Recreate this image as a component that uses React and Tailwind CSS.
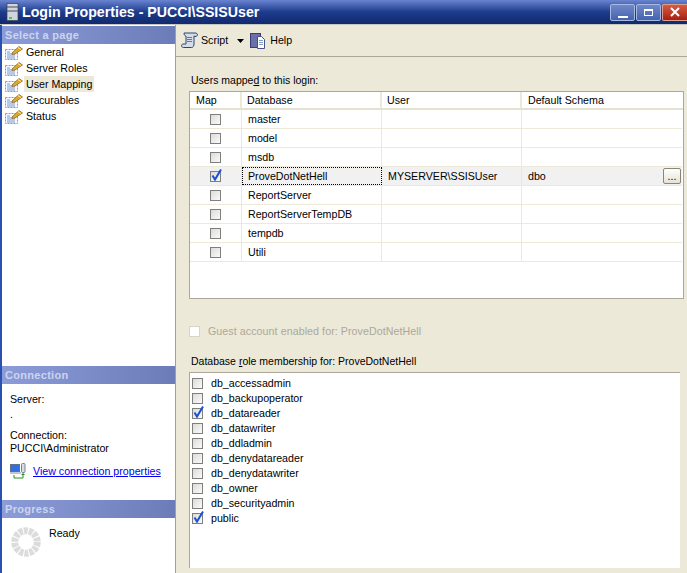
function PageIcon() {
  return (
    <svg width="18" height="15" viewBox="0 0 18 15" className="shrink-0">
      <rect x="0.500" y="4.500" width="12" height="10" fill="#f4f8ff" stroke="#8a9ab8" strokeDasharray="2 1" />
      <path d="M2 7h3M2 9h8M2 11h8M2 13h8" stroke="#7a9ad0" strokeWidth="1" />
      <path d="M7 8L14 1.500l3.500 2.500-7.500 5-3 .5z" fill="#e4a828" stroke="#7a5c18" strokeWidth="0.7" />
      <path d="M13 2.500l3 2" stroke="#ffeea0" strokeWidth="1" />
    </svg>
  );
}

function Check({ checked, className = "" }) {
  return (
    <span className={"relative block w-[11px] h-[11px] shrink-0 border border-[#7f7f7f] bg-gradient-to-br from-[#dcdcd6] to-[#fafafa] " + className}>
      {checked ? (
        <svg width="13" height="14" viewBox="0 0 13 14" className="absolute left-[-1px] top-[-4px]">
          <path d="M2.500 7.500L5 11.500L11 1.500" fill="none" stroke="#1a50d8" strokeWidth="2" />
        </svg>
      ) : null}
    </span>
  );
}

function SectionHead({ children }) {
  return (
    <div className="h-[18px] flex items-center pl-[3px] text-[11px] font-bold text-[#ccd4ee] bg-gradient-to-r from-[#8c9cd8] to-[#6c7cb8] tracking-[0.3px]">
      {children}
    </div>
  );
}

const pages = ["General", "Server Roles", "User Mapping", "Securables", "Status"];
const dbs = ["master", "model", "msdb", "ProveDotNetHell", "ReportServer", "ReportServerTempDB", "tempdb", "Utili"];
const roles = [
  ["db_accessadmin", false],
  ["db_backupoperator", false],
  ["db_datareader", true],
  ["db_datawriter", false],
  ["db_ddladmin", false],
  ["db_denydatareader", false],
  ["db_denydatawriter", false],
  ["db_owner", false],
  ["db_securityadmin", false],
  ["public", true],
];

function Spinner() {
  return (
    <svg width="30" height="30" viewBox="0 0 30 30" className="shrink-0">
      <circle cx="15" cy="15" r="11.250" fill="none" stroke="#dcdcdc" strokeWidth="7" strokeDasharray="4 1.050" />
    </svg>
  );
}

export default function App() {
  return (
    <div
      className="w-[687px] h-[573px] flex flex-col overflow-hidden bg-[#ece9d8] text-[10.67px] leading-[13px] text-black"
      style={{ fontFamily: '"Liberation Sans", Arial, sans-serif' }}
    >
      {/* Title bar */}
      <div className="h-[25px] shrink-0 flex items-center bg-gradient-to-b from-[#6a84d0] via-[#1c3c8c] to-[#12296e] border-b border-[#c8c8c0]">
        <svg width="14" height="18" viewBox="0 0 14 18" className="ml-[6px] shrink-0">
          <rect x="1" y="0.500" width="11" height="17" fill="#d0d4dc" stroke="#3a4250" strokeWidth="0.700" />
          <path d="M1 4h11M1 8h11" stroke="#4a5058" />
          <rect x="3" y="14" width="3" height="2" fill="#40d040" />
        </svg>
        <span className="ml-[2px] text-[14.2px] font-bold text-white">
          {"Login Properties - PUCCI\\SSISUser"}
        </span>
        <div className="ml-auto flex gap-[1px] items-center">
          <div className="w-[25px] h-[17px] rounded-[2px] border border-[#a8b8e0] bg-gradient-to-b from-[#7088c8] to-[#4464b0] flex items-end justify-center pb-[2px]">
            <span className="block w-[10px] h-[2px] bg-white" />
          </div>
          <div className="w-[25px] h-[17px] rounded-[2px] border border-[#a8b8e0] bg-gradient-to-b from-[#7088c8] to-[#4464b0] flex items-center justify-center">
            <span className="block w-[9px] h-[7px] border border-t-2 border-white" />
          </div>
          <div className="w-[25px] h-[17px] rounded-l-[2px] border border-[#d8a090] border-r-0 bg-gradient-to-b from-[#d85a40] to-[#a81c14] flex items-center justify-center">
            <svg width="10" height="10" viewBox="0 0 10 10">
              <path d="M1 1l8 8M9 1l-8 8" stroke="#fff" strokeWidth="2" />
            </svg>
          </div>
        </div>
      </div>

      <div className="flex-1 flex min-h-0">
        {/* Sidebar */}
        <div className="w-[176px] shrink-0 flex flex-col bg-white border-l-2 border-l-[#2a50b0] border-r border-r-[#a0a098] pt-[1px]">
          <SectionHead>Select a page</SectionHead>
          <div className="flex flex-col pl-[3px]">
            {pages.map((p) => (
              <div key={p} className="h-[16px] flex items-center gap-[1px]">
                <PageIcon />
                <span className={"px-[2px] h-[16px] leading-[16px] " + (p === "User Mapping" ? "bg-[#ece9d8]" : "")}>{p}</span>
              </div>
            ))}
          </div>
          <div className="mt-auto">
            <SectionHead>Connection</SectionHead>
            <div className="pl-[8px] pt-[8px] h-[116px]">
              <div className="leading-[15px]">Server:</div>
              <div className="leading-[15px]">.</div>
              <div className="leading-[13px] mt-[7px]">Connection:</div>
              <div className="leading-[13px]">{"PUCCI\\Administrator"}</div>
              <div className="flex items-center gap-[7px] mt-[8px]">
                <svg width="16" height="16" viewBox="0 0 16 16" className="shrink-0">
                  <rect x="0.500" y="1.500" width="9" height="7" fill="#2f6fe0" stroke="#60708a" />
                  <rect x="0" y="9" width="11" height="2" fill="#c0c6d0" />
                  <rect x="11.500" y="0.500" width="3.500" height="9" rx="1" fill="#d8dce4" stroke="#7a8290" />
                  <path d="M4 12v3h9v-4" fill="none" stroke="#2a9020" strokeWidth="1" />
                  <path d="M11 12l2-2 2 2z" fill="#2a9020" />
                </svg>
                <span className="text-[#0000ee] underline">View connection properties</span>
              </div>
            </div>
            <SectionHead>Progress</SectionHead>
            <div className="h-[55px] flex items-start pl-[9px] pt-[9px] gap-[8px]">
              <Spinner />
              <span>Ready</span>
            </div>
          </div>
        </div>

        {/* Main */}
        <div className="flex-1 min-w-0 flex flex-col">
          <div className="h-[32px] shrink-0 flex items-center pl-[5px] border-b border-[#aca899]">
            <svg width="17" height="17" viewBox="0 0 17 17" className="shrink-0">
              <path d="M3 1h11c1.500 0 2.500 .7 2.500 1.700S15.500 4.500 14 4.500L13 4v8c0 2-1 3.500-2.500 3.500H2.500C1 15.500 .5 14.500 .5 13.500S1.500 12 3 12h2V4C4 4 3 3 3 1z" fill="#d4dcea" stroke="#2c4470" />
              <path d="M6 5.500h5M6 7.500h5M6 9.500h5" stroke="#5a78a8" />
            </svg>
            <span className="ml-[3px]">Script</span>
            <svg width="7" height="4" viewBox="0 0 7 4" className="ml-[9px]">
              <path d="M0 0h7L3.500 4z" fill="#000" />
            </svg>
            <svg width="17" height="17" viewBox="0 0 17 17" className="ml-[6px] shrink-0">
              <rect x="0.500" y="1.500" width="10" height="14" fill="#6a70a8" stroke="#3a3e78" />
              <path d="M7.500 4.500h4l3 3v9h-7z" fill="#fff" stroke="#4a5088" />
              <path d="M9 8.500h4M9 10.500h4M9 12.500h4" stroke="#7a9ac8" />
            </svg>
            <span className="ml-[3px]">Help</span>
          </div>

          <div className="flex-1 min-h-0 flex flex-col pl-[13px] pr-[3px]">
            <div className="mt-[17px] h-[13px] shrink-0 ml-[2px] text-[10.5px]">
              Users mappe<span className="underline">d</span> to this login:
            </div>
            <div className="mt-[4px] h-[208px] shrink-0 bg-white border border-[#aca899] overflow-hidden">
              <div className="h-[18px] flex border-b-2 border-b-[#e4e1d0]">
                <div className="w-[52px] pl-[6px] border-r-2 border-r-[#ece9d8] leading-[16px]">Map</div>
                <div className="w-[140px] pl-[5px] border-r-2 border-r-[#ece9d8] leading-[16px]">Database</div>
                <div className="w-[140px] pl-[5px] border-r-2 border-r-[#ece9d8] leading-[16px]">User</div>
                <div className="flex-1 pl-[6px] leading-[16px]">Default Schema</div>
              </div>
              {dbs.map((d) => {
                const active = d === "ProveDotNetHell";
                return (
                  <div key={d} className={"h-[19px] flex mr-[1px] border-b border-b-[#ece9d8] " + (active ? "bg-[#f1f1f1]" : "")}>
                    <div className="w-[52px] flex items-center justify-center border-r border-r-[#ece9d8]">
                      <Check checked={active} className="mr-[1px]" />
                    </div>
                    <div className={"w-[140px] pl-[6px] leading-[18px] " + (active ? "outline-1 outline-dotted outline-black -outline-offset-1" : "border-r border-r-[#ece9d8]")}>{d}</div>
                    <div className="w-[140px] pl-[6px] leading-[18px] border-r border-r-[#ece9d8]">{active ? "MYSERVER\\SSISUser" : ""}</div>
                    <div className="flex-1 pl-[6px] leading-[18px] flex items-center justify-between pr-[1px]">
                      <span>{active ? "dbo" : ""}</span>
                      {active ? (
                        <span className="block w-[18px] h-[16px] rounded-[2px] border border-[#8a8678] bg-gradient-to-b from-white to-[#e6e2d4] text-center leading-[14px]">...</span>
                      ) : null}
                    </div>
                  </div>
                );
              })}
            </div>

            <div className="mt-[26px] flex items-center gap-[8px] text-[#aca899] tracking-[0.07px]">
              <span className="block w-[11px] h-[11px] border border-[#d8d5c4] bg-white" />
              <span>Guest account enabled for: ProveDotNetHell</span>
            </div>
            <div className="mt-[17px] h-[13px] shrink-0 ml-[2px] text-[10.5px]">
              Database <span className="underline">r</span>ole membership for: ProveDotNetHell
            </div>
            <div className="mt-[4px] h-[196px] shrink-0 mr-[4px] bg-white border-l border-t border-l-[#aca899] border-t-[#aca899] pl-[2px] pt-[3px]">
              {roles.map(([r, c]) => (
                <div key={r} className="h-[15px] flex items-center gap-[8px]">
                  <Check checked={c} />
                  <span>{r}</span>
                </div>
              ))}
            </div>
          </div>
        </div>
      </div>
    </div>
  );
}
